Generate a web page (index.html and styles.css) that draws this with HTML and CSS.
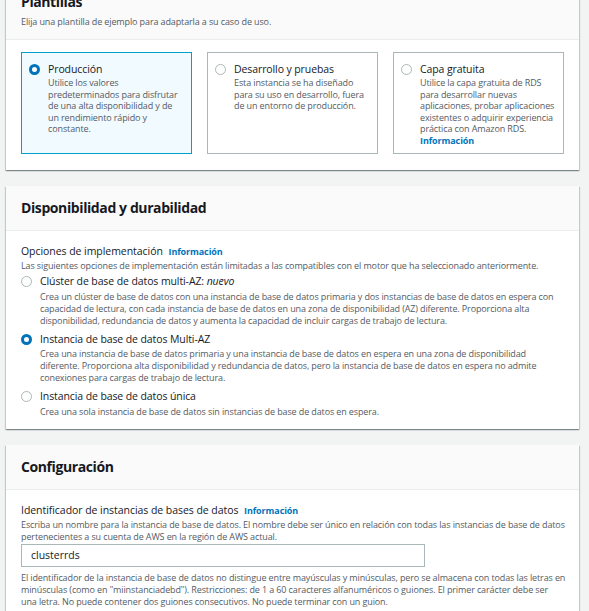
FILE: index.html
```html
<!DOCTYPE html>
<html lang="es">
<head>
<meta charset="utf-8">
<link rel="stylesheet" href="styles.css">
</head>
<body>
<div class="page">
  <section class="panel panel-first">
    <header class="panel-head">
      <h2 class="panel-title">Plantillas</h2>
      <p class="panel-sub">Elija una plantilla de ejemplo para adaptarla a su caso de uso.</p>
    </header>
    <div class="panel-body tiles">
      <div class="tile selected">
        <span class="radio on"></span>
        <div class="tile-text">
          <div class="opt-label">Producción</div>
          <div class="desc">Utilice los valores predeterminados para disfrutar de una alta disponibilidad y de un rendimiento rápido y constante.</div>
        </div>
      </div>
      <div class="tile">
        <span class="radio"></span>
        <div class="tile-text">
          <div class="opt-label">Desarrollo y pruebas</div>
          <div class="desc">Esta instancia se ha diseñado para su uso en desarrollo, fuera de un entorno de producción.</div>
        </div>
      </div>
      <div class="tile">
        <span class="radio"></span>
        <div class="tile-text">
          <div class="opt-label">Capa gratuita</div>
          <div class="desc">Utilice la capa gratuita de RDS para desarrollar nuevas aplicaciones, probar aplicaciones existentes o adquirir experiencia práctica con Amazon RDS. <a class="info block">Información</a></div>
        </div>
      </div>
    </div>
  </section>

  <section class="panel">
    <header class="panel-head single">
      <h2 class="panel-title">Disponibilidad y durabilidad</h2>
    </header>
    <div class="panel-body">
      <div class="field-label">Opciones de implementación <a class="info">Información</a></div>
      <div class="desc">Las siguientes opciones de implementación están limitadas a las compatibles con el motor que ha seleccionado anteriormente.</div>
      <div class="options">
        <div class="option">
          <span class="radio"></span>
          <div>
            <div class="opt-label">Clúster de base de datos multi-AZ: <em>nuevo</em></div>
            <div class="desc">Crea un clúster de base de datos con una instancia de base de datos primaria y dos instancias de base de datos en espera con capacidad de lectura, con cada instancia de base de datos en una zona de disponibilidad (AZ) diferente. Proporciona alta disponibilidad, redundancia de datos y aumenta la capacidad de incluir cargas de trabajo de lectura.</div>
          </div>
        </div>
        <div class="option">
          <span class="radio on"></span>
          <div>
            <div class="opt-label">Instancia de base de datos Multi-AZ</div>
            <div class="desc">Crea una instancia de base de datos primaria y una instancia de base de datos en espera en una zona de disponibilidad diferente. Proporciona alta disponibilidad y redundancia de datos, pero la instancia de base de datos en espera no admite conexiones para cargas de trabajo de lectura.</div>
          </div>
        </div>
        <div class="option">
          <span class="radio"></span>
          <div>
            <div class="opt-label">Instancia de base de datos única</div>
            <div class="desc">Crea una sola instancia de base de datos sin instancias de base de datos en espera.</div>
          </div>
        </div>
      </div>
    </div>
  </section>

  <section class="panel">
    <header class="panel-head single">
      <h2 class="panel-title">Configuración</h2>
    </header>
    <div class="panel-body">
      <div class="field-label">Identificador de instancias de bases de datos <a class="info">Información</a></div>
      <div class="desc">Escriba un nombre para la instancia de base de datos. El nombre debe ser único en relación con todas las instancias de base de datos pertenecientes a su cuenta de AWS en la región de AWS actual.</div>
      <div class="input">clusterrds</div>
      <div class="desc">El identificador de la instancia de base de datos no distingue entre mayúsculas y minúsculas, pero se almacena con todas las letras en minúsculas (como en "miinstanciadebd"). Restricciones: de 1 a 60 caracteres alfanuméricos o guiones. El primer carácter debe ser una&nbsp;letra. No puede contener dos guiones consecutivos. No puede terminar con un guion.</div>
    </div>
  </section>
</div>
</body>
</html>
```

FILE: styles.css
```css
* { box-sizing: border-box; }
html, body { margin: 0; padding: 0; }
body {
  background: #f2f3f3;
  font-family: "Open Sans", "Noto Sans", sans-serif;
  color: #16191f;
  overflow: hidden;
}
.page {
  padding: 0 10px 0 6px;
  display: flex;
  flex-direction: column;
  gap: 16px;
}
.panel {
  background: #fff;
  box-shadow: 0 1px 1px 0 rgba(0, 28, 36, 0.3), 1px 1px 1px 0 rgba(0, 28, 36, 0.15), -1px 1px 1px 0 rgba(0, 28, 36, 0.15);
}
.panel-first { margin-top: -20px; }
.panel-head {
  background: #fafafa;
  border-bottom: 1px solid #eaeded;
  padding: 12px 15px 10px;
}
.panel-head.single { padding: 12px 15px; height: 45px; display: flex; align-items: center; }
.panel-title {
  margin: 0;
  font-size: 14px;
  line-height: 20px;
  font-weight: 700;
  letter-spacing: -0.4px;
}
.panel-sub {
  margin: 3px 0 0;
  font-size: 9px;
  line-height: 14px;
  color: #545b64;
  letter-spacing: -0.12px;
}
.panel-body { padding: 12px 13px 11px 15px; }
.tiles {
  display: grid;
  grid-template-columns: repeat(3, 171px);
  gap: 15px;
  padding-bottom: 16px;
}
.tile {
  border: 1px solid #aab7b8;
  height: 102px;
  padding: 9px 6px 8px 7px;
  display: flex;
  gap: 8px;
}
.tile.selected {
  background: #f1faff;
  border-color: #00a1c9;
}
.tile .desc { line-height: 11.5px; }
.radio {
  flex: none;
  width: 11px;
  height: 11px;
  border-radius: 50%;
  border: 1px solid #aab7b8;
  background: #fff;
  margin-top: 2px;
}
.radio.on {
  border: 3.5px solid #0073bb;
}
.opt-label {
  font-size: 10.5px;
  line-height: 15px;
  letter-spacing: -0.1px;
}
.option .opt-label { margin-bottom: 1.5px; }
.desc {
  font-size: 9px;
  line-height: 12px;
  color: #545b64;
  letter-spacing: -0.12px;
}
.info {
  color: #0073bb;
  font-weight: 700;
  font-size: 9px;
  margin-left: 3px;
  letter-spacing: -0.1px;
}
.info.block { display: block; margin-left: 0; }
.field-label {
  font-size: 10.5px;
  line-height: 16px;
  letter-spacing: -0.05px;
}
.options {
  display: flex;
  flex-direction: column;
  gap: 5px;
  margin-top: 2px;
}
.option {
  display: flex;
  gap: 8px;
}
.input {
  width: 404px;
  height: 23px;
  border: 1px solid #aab7b8;
  font-size: 10.5px;
  line-height: 21px;
  padding: 0 9px;
  margin: 1px 0 5px;
}
```
